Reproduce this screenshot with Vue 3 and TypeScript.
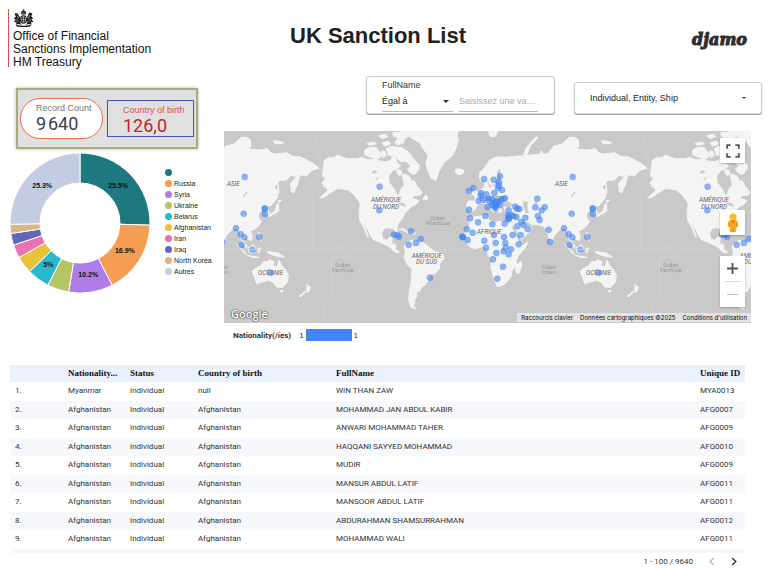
<script setup lang="ts">
import { ref } from 'vue'

interface Slice {
  label: string
  share: number
  color: string
  tag?: string
}

const slices: Slice[] = [
  { label: '', share: 25.5, color: '#1d7880', tag: '25.5%' },
  { label: 'Russia', share: 16.9, color: '#f59d52', tag: '16.9%' },
  { label: 'Syria', share: 10.2, color: '#ae7de8', tag: '10.2%' },
  { label: 'Ukraine', share: 5, color: '#b5c563' },
  { label: 'Belarus', share: 5.2, color: '#2bb8cb', tag: '5%' },
  { label: 'Afghanistan', share: 4, color: '#e9c23a' },
  { label: 'Iran', share: 3.1, color: '#e872b2' },
  { label: 'Iraq', share: 2.7, color: '#6466b8' },
  { label: 'North Korea', share: 2.1, color: '#dcb57f' },
  { label: 'Autres', share: 25.3, color: '#c4cce2', tag: '25.3%' },
]

function polar(radius: number, share: number): [number, number] {
  const a = (share / 100) * Math.PI * 2
  return [70 + radius * Math.sin(a), 70 - radius * Math.cos(a)]
}

let total = 0
const arcs = slices.map((s) => {
  const from = total
  total += s.share
  const [x1, y1] = polar(70, from)
  const [x2, y2] = polar(70, total)
  const [x3, y3] = polar(40, total)
  const [x4, y4] = polar(40, from)
  const [tx, ty] = polar(53, (from + total) / 2)
  return {
    ...s,
    d: `M${x1} ${y1}A70 70 0 0 1 ${x2} ${y2}L${x3} ${y3}A40 40 0 0 0 ${x4} ${y4}Z`,
    tx,
    ty: ty + 2,
  }
})

const points: [number, number][] = [
  // Americas
  [-61, 176], [-62, 247], [33, 310], [-18, 320], [-8, 321], [-3, 326], [26, 350], [48, 345], [62, 333], [90, 449],
  // Europe
  [252, 153], [281, 155], [300, 145], [297, 163], [297, 173], [294, 180], [306, 186], [220, 180], [207, 189],
  [243, 195], [242, 203], [259, 199], [283, 195], [236, 219], [252, 216], [270, 222], [278, 216], [284, 224],
  [290, 230], [296, 222], [304, 216], [310, 213], [315, 211], [263, 237], [276, 232], [284, 236], [286, 240],
  [290, 222], [300, 232], [207, 245], [268, 212], [285, 230],
  // Middle East and Central Asia
  [326, 247], [325, 262], [326, 268], [327, 272], [325, 274], [334, 262], [346, 236], [352, 242], [358, 243],
  [349, 267], [376, 269], [364, 282], [370, 291], [352, 295], [383, 303], [314, 287], [412, 212], [406, 238],
  [434, 238], [425, 247], [414, 264], [419, 276], [340, 264],
  // Africa
  [210, 271], [256, 264], [234, 283], [277, 289], [200, 304], [218, 314], [187, 326], [189, 327], [188, 328],
  [203, 336], [253, 338], [282, 321], [312, 327], [338, 321], [362, 321], [287, 345], [316, 345], [258, 359],
  [289, 375], [317, 359], [311, 370], [333, 364], [356, 349], [326, 379], [279, 394], [309, 416], [292, 452],
  // South and East Asia, Oceania
  [446, 305], [450, 342], [492, 301], [506, 319], [517, 328], [509, 351], [541, 365], [562, 327], [515, 257],
  [518, 147], [578, 241], [579, 243], [579, 258], [596, 434],
]

const rows = [
  ['Myanmar', 'Individual', 'null', 'WIN THAN ZAW', 'MYA0013'],
  ['Afghanistan', 'Individual', 'Afghanistan', 'MOHAMMAD JAN ABDUL KABIR', 'AFG0007'],
  ['Afghanistan', 'Individual', 'Afghanistan', 'ANWARI MOHAMMAD TAHER', 'AFG0009'],
  ['Afghanistan', 'Individual', 'Afghanistan', 'HAQQANI SAYYED MOHAMMAD', 'AFG0010'],
  ['Afghanistan', 'Individual', 'Afghanistan', 'MUDIR', 'AFG0009'],
  ['Afghanistan', 'Individual', 'Afghanistan', 'MANSUR ABDUL LATIF', 'AFG0011'],
  ['Afghanistan', 'Individual', 'Afghanistan', 'MANSOOR ABDUL LATIF', 'AFG0011'],
  ['Afghanistan', 'Individual', 'Afghanistan', 'ABDURAHMAN SHAMSURRAHMAN', 'AFG0012'],
  ['Afghanistan', 'Individual', 'Afghanistan', 'MOHAMMAD WALI', 'AFG0011'],
]

const nameQuery = ref('')
</script>

<template>
  <div class="page">
    <header class="header">
      <div class="brand">
        <svg class="crest" viewBox="0 0 42 36" aria-hidden="true">
          <g fill="#1c1c1c">
            <path d="M16 8q0-5 5-5t5 5l-1 3h-8z" />
            <circle cx="21" cy="2" r="1.6" />
            <ellipse cx="21" cy="21" rx="7" ry="8.5" />
            <path d="M13 15l-4-6-4-1-2 4 3 2-4 5 3 2-3 6 5-1-1 5 6-1 5 2-3-6 2-4zM29 15l3-7 4-1 3 4-3 3 4 4-3 3 4 5-5 0 1 5-6-1-5 2 3-6-2-4z" />
            <path d="M5 31q16 5 32 0l-3 4q-13 2-26 0z" />
          </g>
          <g fill="none" stroke="#fff" stroke-width="1">
            <ellipse cx="21" cy="21" rx="4.6" ry="5.8" />
            <path d="M21 15v12M17 21h8M8 13l3 5-4 4 4 4M34 12l-3 6 4 4-4 4M18 8h6" />
          </g>
        </svg>
        <div class="brand-name">Office of Financial<br />Sanctions Implementation<br />HM Treasury</div>
      </div>
      <h1 class="title">UK Sanction List</h1>
      <div class="djamo">djamo</div>
    </header>

    <div class="body">
      <aside class="side">
        <section class="scores">
          <div class="score pill">
            <div class="score-label">Record Count</div>
            <div class="score-value">9&#8202;640</div>
          </div>
          <div class="score square">
            <div class="score-label">Country of birth</div>
            <div class="score-value">126,0</div>
          </div>
        </section>
        <section class="share">
          <svg class="donut" viewBox="0 0 140 140" role="img" aria-label="Nationality">
            <path v-for="(a, i) in arcs" :key="i" :d="a.d" :fill="a.color" stroke="#fff" stroke-width="1" />
            <template v-for="(a, i) in arcs" :key="'t' + i">
              <text v-if="a.tag" :x="a.tx" :y="a.ty" class="slice-text">{{ a.tag }}</text>
            </template>
          </svg>
          <ul class="keys">
            <li v-for="(s, i) in slices" :key="i">
              <i class="key-dot" :style="{ background: s.color }"></i>{{ s.label }}
            </li>
          </ul>
        </section>
      </aside>

      <main class="main">
        <div class="filters">
          <div class="card name-filter">
            <label class="filter-label" for="name-query">FullName</label>
            <div class="filter-fields">
              <div class="picker operator">
                <select aria-label="Condition">
                  <option>Égal à</option>
                </select>
                <svg class="caret" viewBox="0 0 6 3" aria-hidden="true"><path d="M0 0h6l-3 3z" /></svg>
              </div>
              <input id="name-query" v-model="nameQuery" type="text" placeholder="Saisissez une va…" />
            </div>
          </div>
          <div class="card type-filter">
            <div class="picker">
              <select aria-label="Type">
                <option>Individual, Entity, Ship</option>
              </select>
              <svg class="caret small" viewBox="0 0 6 3" aria-hidden="true"><path d="M0 0h6l-3 3z" /></svg>
            </div>
          </div>
        </div>

        <div class="map">
          <svg class="world" viewBox="-528 9 1581 576" preserveAspectRatio="xMidYMid slice" role="img" aria-label="Map">
            <defs>
              <g id="world">
                <g fill="none" stroke="#d5d5d5" stroke-width="2">
                  <path d="M-528 365h984M-262 9l30 106-54 75 24 22v153h80l-14-14h20l32 46-14-9h-48v108l-20 20v80" />
                </g>
                <g fill="#f4f4f4" stroke="#f4f4f4" stroke-width="3" stroke-linejoin="round">
                  <!-- Americas -->
                  <g transform="translate(-270 0)">
                    <path d="M43 97l14-8 14-1 14-7 10 6 17 5 28 0 16-4 12 6 16 1 14-5 10 9 22 2 12-4 10-18 6 10 2 14 12 10-8 8-14 6-14 16 1 20 16 20 8 20 8-4 2-14 12-14-6-26 6-8 14 8 8 14 8 0 10 18 14 16-6 8-18 2-10 10 14 0 10 6-14 14-8 2-20 20-10 20-10 10-4 18 4 18-4 2-8-20-18-4-14 4-6 12 3 18 12 4 10-10 8 0-4 20 12 2 2 16 10 6-2 4-14-4-12-14-26-12-24-10-6-8-14-28-6-2 12 30-3 0-14-34-10-16-2-26 4-22-6-12-14-18-18-14-30-4-16 10-24 16-14 4 26-26-14-10-4-12 10-12-10-6z" />
                    <path d="M346 202l4 0 3 12-14 0zM164 66l14-8 20 0 8 10 10 16-14 8-20-4-18-8zM228 62l12-6 34 2 24 16 12 18 18 20-2 12-12 16-14-6-8-10 10-10-14-14-18 0-12-14-22-4zM248 14l54-5-6 14-12 10-4 12-18 6-8-8 12-14-16-4zM205 24l22-6 6 8-16 6zM172 46l22-4 4 6-20 4zM216 44l20-4 6 8-20 6zM212 72l10-4 8 12-10 10zM258 126l14 0 6 14-12 2z" />
                    <path d="M298 9h147l-4 16 4 12-9 28-9 18-24 20-16 26-9 28-14-6-10-22-6-24 6-22-14-20-12-20-20-10-14-10z" />
                    <path d="M436 124l10-2 14 4 2 8-12 6-12-4zM266 304l14-2 18 12-6 0-14-8zM302 314l14 1-2 4-12-1z" />
                    <path d="M282 354l8-10 16-8 6 4 22 0 14 10 12 10 12 10 26 8 4 12-12 16-2 16-12 14-12 4-8 16-12 16-8 4-8 14-8 2 0 14-6 10 0 8-4 8 8 12-16-8-6-18 2-28 6-30 2-36-14-14-10-22 4-16z" />
                  </g>
                  <!-- Europe and Africa -->
                  <path d="M312 88l-26-1-18 10-14 22-14 14-2 14 4 12 14-2 8-2 8 18 10-4 4-14 6-10-2-12 14-18 10 0-12 16 0 12 16 2 8 0-22 6-3 8-3 10-10 6-22 4-3-14-4-8-6 6 1 14-10 6-10 8-20 2 2 6 10 6-2 14-20 0-4 10 2 14 8 8 14-4 10-18 14-4 12 2 8 14 12 10 4-8-10-12-2-6 6-2 12 14 6 16 6 2 4-8-4-8 8-2 8 14 24 4 2 10-6 10 110 0 40-60-20-140z" />
                  <path d="M206 268l22-2 34-4 4 14 18 8 14-4 36 6 6 12 12 24 16 20 16-2-6 16-24 28-6 14 2 16-14 12-2 18-12 16-12 12-18 4-6-14-8-24-6-22 4-20-12-14-2-20-14-6-22 6-14-4-12-14-8-14 4-20 12-16z" />
                  <path d="M364 400l2 10-8 24-8 2-3-10 3-14zM224 184l-6 16 10-2 6-4-8-10-4-8zM210 188l-6 6 4 4 6-4z" />
                  <path d="M370 84l8-24 30-34 6 4-24 24-10 28zM264 12l30-3-8 16-14 2z" />
                  <!-- Asia and Oceania -->
                  <g transform="translate(300 0)">
                    <path d="M0 88l16 0 22 12-2 8-12 4 6 4 20-8 18-2 16-6 14-4 10 2 12-10 4-22 4 12 4 18 14-4 2-22 14-16 24-6 22-20 18 0 10 8 0 18-4 10 30 2 24-4 10 12 16 4 32-4 18 12 22 0 36 18 22 16-24 8-14 16-20-4-6 24-12 30-8-2-2-26 18-20-18-4-12 14-22 2-16 20 14 12-4 20-16 20-14 8 8 22-10 0-8-16-12 6-6 14 10 18-12 16-18 10-6 2 10 14-4 14-10-4-8-8-4 14 10 18-8-2-12-26-2-16-10-14-14 4-16 18-8 18-8-8-10-28-6-8-16-6-20 0-14-10-6 0 6 12 12 6-6 14-24 22-12 6-12-24-14-26 4-30-14-20-10-50z" />
                    <path d="M318 164l3 30-4 0zM318 218l10-2-6 8zM320 228l0 22-18 10-12 6-2-4 22-12 4-22zM258 315l6 0 4 24-8-8zM228 360l16-10 8 10-10 16-12-4zM195 350l8 4 20 24-6-2zM224 382l24 4 14 2-16 1zM258 362l8-2-4 14-4-2zM285 370l12 2 24 4 16 12-16-2-16-4-18-8zM154 336l4 8-6 0zM234 311l4 1-2 4z" />
                    <path d="M240 430l12-10 14-7 8-12 12 0 6-5 14 5-3 11 12 5 6-21 8 17 12 12 8 18-3 19-14 16-18-1-10-14-14-6-20 5-16 6-5-16zM324 487l10 1-5 6zM405 470l10 8-4 12-6 4zM402 488l-14 18-6-2zM304 38l20 2 12 5-26 3z" />
                  </g>
                </g>
                <!-- Inland seas and lakes -->
                <g fill="#c9c9c9">
                  <path d="M308 226l12-6 10 4 12 8-14 4-18 0zM370 218l14 4-2 16 4 18-10-2-6-20zM404 222l8 0-2 8-6 0z" />
                  <path d="M370 276l8 8 10 8-4 3-12-8-6-10zM336 290l8 10 22 40 24-4-22 16-12-14-20-40z" />
                  <path d="M-86 132l12-6 6 4-10 8zM-76 152l12-5-4 8zM-10 222l22 4 8 10-16-4zM512 206l12-16 2 2-10 16z" />
                </g>
                <g class="map-text dark">
                  <text x="-42" y="223">AMÉRIQUE</text><text x="-42" y="242">DU NORD</text>
                  <text x="80" y="391">AMÉRIQUE</text><text x="80" y="409">DU SUD</text>
                  <text x="268" y="319">AFRIQUE</text><text x="272" y="218">EUROPE</text>
                  <text x="484" y="175">ASIE</text><text x="596" y="441">OCÉANIE</text>
                </g>
                <g class="map-text light">
                  <text x="113" y="276">Océan</text><text x="113" y="291">Atlantique</text>
                  <text x="446" y="424">Océan</text><text x="446" y="439">Indien</text>
                  <text x="-172" y="417">Océan</text><text x="-172" y="432">Pacifique</text>
                </g>
                <g fill="#4285f4" fill-opacity=".6" stroke="#4285f4" stroke-opacity=".5" stroke-width="2">
                  <circle v-for="(p, i) in points" :key="i" :cx="p[0]" :cy="p[1]" r="9" />
                </g>
              </g>
            </defs>
            <rect x="-1600" y="-600" width="3800" height="1800" fill="#c9c9c9" />
            <use href="#world" x="-984" />
            <use href="#world" />
            <use href="#world" x="984" />
          </svg>
          <div class="map-tools">
            <button class="tool" type="button" aria-label="Plein écran">
              <svg viewBox="0 0 12 12"><path d="M1 4V1h3M8 1h3v3M11 8v3H8M4 11H1V8" fill="none" stroke="#555" stroke-width="1.6" /></svg>
            </button>
            <button class="tool person" type="button" aria-label="Street View">
              <svg viewBox="0 0 12 20">
                <path d="M3.500 7h5q2 0 2.300 2l.6 4.500-1.800.5L9 19H3l-.6-5-1.800-.5L1.200 9q.3-2 2.300-2z" fill="#f9ac1c" />
                <circle cx="6" cy="4" r="3.600" fill="#fbb829" />
                <path d="M3.500 7.200q2.500 1.600 5 0L6 10.500z" fill="#e06a2c" />
                <path d="M6 14v5M2.600 10v4M9.400 10v4" stroke="#cf7f12" stroke-width=".7" />
              </svg>
            </button>
            <div class="zoom">
              <button type="button" aria-label="Zoom avant">
                <svg viewBox="0 0 12 12"><path d="M6 1v10M1 6h10" stroke="#555" stroke-width="1.700" /></svg>
              </button>
              <button type="button" aria-label="Zoom arrière">
                <svg viewBox="0 0 12 12"><path d="M1 6h10" stroke="#bbb" stroke-width="1" /></svg>
              </button>
            </div>
          </div>
          <div class="google">Google</div>
          <div class="credits">
            <button type="button">Raccourcis clavier</button>
            <span>Données cartographiques ©2025</span>
            <a href="#">Conditions d'utilisation</a>
          </div>
        </div>

        <div class="scale">
          <b>Nationality(/ies)</b>
          <span>1</span><i class="scale-bar"></i><span>1</span>
        </div>
      </main>
    </div>

    <section class="listing">
      <table>
        <thead>
          <tr>
            <th class="c-num"></th>
            <th class="c-nat">Nationality...</th>
            <th class="c-status">Status</th>
            <th class="c-birth">Country of birth</th>
            <th>FullName</th>
            <th class="c-id">Unique ID</th>
          </tr>
        </thead>
        <tbody>
          <tr v-for="(r, i) in rows" :key="i">
            <td>{{ i + 1 }}.</td>
            <td v-for="(c, j) in r" :key="j">{{ c }}</td>
          </tr>
        </tbody>
      </table>
      <div class="next-row"></div>
      <nav class="pager">
        <span>1 - 100 / 9640</span>
        <button type="button" disabled aria-label="Page précédente">
          <svg viewBox="0 0 6 10"><path d="M5 1L1 5l4 4" fill="none" stroke="#aaa" stroke-width="1.200" /></svg>
        </button>
        <button type="button" aria-label="Page suivante">
          <svg viewBox="0 0 6 10"><path d="M1 1l4 4-4 4" fill="none" stroke="#333" stroke-width="1.500" /></svg>
        </button>
      </nav>
    </section>
  </div>
</template>

<style>
body {
  margin: 0;
  background: #fff;
}
</style>

<style scoped>
.page {
  font-family: 'Liberation Sans', Arial, sans-serif;
  color: #333;
}
.page * {
  box-sizing: border-box;
}
button {
  display: flex;
  align-items: center;
  justify-content: center;
  padding: 0;
  border: 0;
  background: none;
  font: inherit;
  color: inherit;
}
.header {
  display: grid;
  grid-template-columns: 282px 1fr auto;
  align-items: start;
  height: 76px;
  padding: 9px 21px 0 8px;
}
.brand {
  height: 58px;
  padding-left: 4px;
  border-left: 1px solid #d9534a;
}
.crest {
  display: block;
  width: 21px;
  height: 18px;
}
.brand-name {
  margin-top: 3px;
  font-size: 12px;
  line-height: 13px;
  color: #111;
}
.title {
  margin: 13px 0 0;
  font-size: 22px;
  line-height: 28px;
  color: #212121;
}
.djamo {
  margin-top: 21px;
  font-family: 'DejaVu Serif', serif;
  font-size: 16px;
  font-weight: bold;
  font-style: italic;
  line-height: 20px;
  color: #2e2e2e;
  -webkit-text-stroke: 1px #2e2e2e;
}
.body {
  display: grid;
  grid-template-columns: 224px 1fr;
}
.side {
  padding: 12px 0 0 10px;
}
.scores {
  display: flex;
  align-items: center;
  gap: 4px;
  width: 182px;
  height: 61px;
  margin-left: 6px;
  padding: 0 2px;
  background: #e0e0e0;
  border: 2px solid #a9ab7c;
  box-shadow: 0 0 3px rgba(0, 0, 0, 0.3);
}
.score {
  padding: 4px 0 0 15px;
}
.pill {
  width: 83px;
  height: 41px;
  background: #fff;
  border: 1px solid #f06a45;
  border-radius: 20px;
}
.square {
  width: 87px;
  height: 37px;
  border: 1px solid #4353b8;
}
.score-label {
  font-size: 9px;
  line-height: 11px;
  color: #777;
}
.score-value {
  margin-top: 1px;
  font-family: Roboto, sans-serif;
  font-size: 18px;
  line-height: 18px;
  color: #3c4248;
}
.square .score-label {
  color: #d35454;
}
.square .score-value {
  color: #c3202a;
}
.share {
  display: flex;
  gap: 15px;
  margin-top: 4px;
}
.donut {
  width: 140px;
  height: 140px;
}
.slice-text {
  font-size: 7px;
  font-weight: bold;
  fill: #111;
  text-anchor: middle;
}
.keys {
  margin: 14px 0 0;
  padding: 0;
  list-style: none;
  font-size: 7px;
  color: #222;
}
.keys li {
  display: flex;
  align-items: center;
  gap: 2px;
  height: 11px;
  white-space: nowrap;
}
.key-dot {
  width: 7px;
  height: 7px;
  border-radius: 50%;
}
.filters {
  display: flex;
  align-items: flex-end;
  gap: 19px;
  height: 38px;
  padding: 0 6px 0 142px;
}
.card {
  flex: 1 1 0;
  min-width: 0;
  background: #fff;
  border: 1px solid #ccc;
  border-radius: 3px;
  box-shadow: 0 1px 1px rgba(0, 0, 0, 0.35);
}
.name-filter {
  height: 38px;
  padding: 2px 16px 0 15px;
}
.type-filter {
  display: flex;
  align-items: center;
  height: 32px;
  padding: 0 15px;
}
.filter-label {
  display: block;
  font-size: 9px;
  line-height: 12px;
}
.filter-fields {
  display: grid;
  grid-template-columns: 71px 1fr;
  gap: 6px;
}
.picker {
  display: flex;
  align-items: center;
  flex: 1;
}
select,
input {
  flex: 1;
  min-width: 0;
  height: 21px;
  padding: 0;
  border: 0;
  border-radius: 0;
  background: none;
  appearance: none;
  outline: 0;
  font: 9px 'Liberation Sans', Arial, sans-serif;
  color: #222;
}
.operator,
input {
  border-bottom: 1px solid #bbb;
}
.operator select {
  height: 20px;
}
input::placeholder {
  color: #aaa;
}
.caret {
  width: 6px;
  height: 3px;
  margin-right: 4px;
  fill: #333;
}
.caret.small {
  width: 4px;
  height: 2px;
  margin-right: 0;
}
.map {
  position: relative;
  height: 192px;
  margin: 17px 17px 0 0;
  overflow: hidden;
  background: #c9c9c9;
}
.world {
  display: block;
  width: 100%;
  height: 100%;
}
.map-text {
  font-family: Roboto, sans-serif;
  text-anchor: middle;
}
.dark {
  font-size: 19px;
  font-style: italic;
  fill: #666;
}
.light {
  font-size: 16px;
  fill: #999;
}
.map-tools {
  position: absolute;
  top: 7px;
  right: 6px;
  bottom: 16px;
  display: flex;
  flex-direction: column;
}
.tool,
.zoom {
  width: 25px;
  background: #fff;
  box-shadow: 0 1px 2px rgba(0, 0, 0, 0.25);
}
.tool {
  height: 25px;
}
.tool svg {
  width: 14px;
  height: 14px;
}
.person {
  margin-top: auto;
  margin-bottom: 21px;
}
.tool.person svg {
  width: 12px;
  height: 20px;
}
.zoom button {
  width: 17px;
  height: 25px;
  margin: 0 4px;
}
.zoom button + button {
  height: 26px;
  border-top: 1px solid #ddd;
}
.zoom svg {
  width: 13px;
  height: 13px;
}
.google {
  position: absolute;
  left: 7px;
  bottom: 2px;
  font-family: 'Open Sans', sans-serif;
  font-size: 11px;
  font-weight: 600;
  line-height: 14px;
  color: #fff;
  text-shadow: 0 0 1px #555, 0 0 1px #555, 0 0 1px #555, 0 0 2px #777;
}
.credits {
  position: absolute;
  right: 0;
  bottom: 1px;
  display: flex;
  gap: 7px;
  padding: 0 4px;
  background: rgba(240, 240, 240, 0.7);
  font-family: Inter, sans-serif;
  font-size: 6px;
  line-height: 9px;
  color: #000;
}
.credits a {
  color: inherit;
  text-decoration: none;
}
.scale {
  display: flex;
  align-items: center;
  gap: 2px;
  height: 12px;
  margin: 6px 0 0 9px;
  font-size: 8px;
}
.scale b {
  margin-right: 6px;
  font-family: Roboto, sans-serif;
}
.scale-bar {
  width: 46px;
  height: 12px;
  background: #4285f4;
}
.listing {
  margin: 24px 23px 0 10px;
}
table {
  width: 100%;
  table-layout: fixed;
  border-collapse: collapse;
}
th {
  height: 17px;
  padding: 0;
  background: #eaf1fd;
  font-family: 'Liberation Serif', serif;
  font-size: 9px;
  line-height: 11px;
  text-align: left;
  color: #111;
}
td {
  height: 19px;
  padding: 0 0 1px;
  font-family: Roboto, sans-serif;
  font-size: 8px;
  line-height: 10px;
  white-space: nowrap;
}
td:first-child {
  padding-left: 5px;
}
tbody tr:nth-child(even) td {
  height: 18px;
  background: #f7f8fb;
}
.c-num {
  width: 58px;
}
.c-nat {
  width: 62px;
}
.c-status {
  width: 68px;
}
.c-birth {
  width: 138px;
}
.c-id {
  width: 45px;
}
.next-row {
  height: 4px;
  background: #f7f8fb;
}
.pager {
  display: flex;
  align-items: center;
  justify-content: flex-end;
  gap: 16px;
  height: 17px;
  padding-right: 8px;
  font-family: Roboto, sans-serif;
  font-size: 8px;
}
.pager svg {
  display: block;
  width: 6px;
  height: 9px;
}
</style>
